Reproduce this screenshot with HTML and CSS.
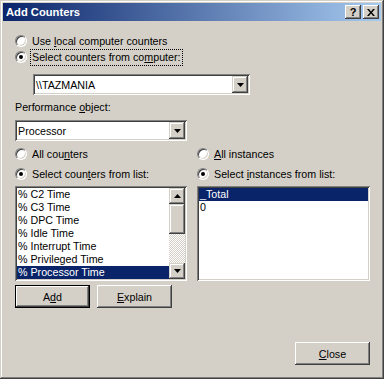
FILE: index.html
```html
<!DOCTYPE html>
<html lang="en">
<head>
  <meta charset="UTF-8" />
  <title>Add Counters</title>
  <link rel="stylesheet" href="styles.css">
</head>
<body>
  <div class="window">
    <div class="titlebar">
      <span class="title">Add Counters</span>
      <div class="caption-buttons">
        <span class="cap-btn">?</span>
        <span class="cap-btn close-x">
          <svg width="8" height="7" viewBox="0 0 8 7"><path d="M0 0h2l2 2.5L6 0h2L5 3.5 8 7H6L4 4.5 2 7H0l3-3.5z" fill="#000"/></svg>
        </span>
      </div>
    </div>

    <div class="content">
      <div class="radio-row">
        <span class="radio"></span>
        <span>Use <u>l</u>ocal computer counters</span>
      </div>
      <div class="radio-row">
        <span class="radio checked"></span>
        <span class="focus">Select counters from co<u>m</u>puter:</span>
      </div>

      <div class="combo computer">
        <span class="combo-text">\\TAZMANIA</span>
        <span class="drop-btn"><svg width="7" height="4" viewBox="0 0 7 4"><path d="M0 0h7L3.5 4z" fill="#000"/></svg></span>
      </div>

      <div class="label">Performance <u>o</u>bject:</div>
      <div class="combo object">
        <span class="combo-text">Processor</span>
        <span class="drop-btn"><svg width="7" height="4" viewBox="0 0 7 4"><path d="M0 0h7L3.5 4z" fill="#000"/></svg></span>
      </div>

      <div class="columns">
        <div class="column">
          <div class="radio-row">
            <span class="radio"></span>
            <span>All cou<u>n</u>ters</span>
          </div>
          <div class="radio-row">
            <span class="radio checked"></span>
            <span>Select coun<u>t</u>ers from list:</span>
          </div>
          <div class="listbox">
            <ul class="items">
              <li>% C2 Time</li>
              <li>% C3 Time</li>
              <li>% DPC Time</li>
              <li>% Idle Time</li>
              <li>% Interrupt Time</li>
              <li>% Privileged Time</li>
              <li class="selected">% Processor Time</li>
            </ul>
            <div class="scrollbar">
              <span class="sb-btn"><svg width="7" height="4" viewBox="0 0 7 4"><path d="M3.5 0L7 4H0z" fill="#000"/></svg></span>
              <span class="sb-thumb"></span>
              <span class="sb-track"></span>
              <span class="sb-btn"><svg width="7" height="4" viewBox="0 0 7 4"><path d="M0 0h7L3.5 4z" fill="#000"/></svg></span>
            </div>
          </div>
        </div>

        <div class="column">
          <div class="radio-row">
            <span class="radio"></span>
            <span><u>A</u>ll instances</span>
          </div>
          <div class="radio-row">
            <span class="radio checked"></span>
            <span>Select <u>i</u>nstances from list:</span>
          </div>
          <div class="listbox">
            <ul class="items">
              <li class="selected">_Total</li>
              <li>0</li>
            </ul>
          </div>
        </div>
      </div>

      <div class="button-row">
        <span class="button default">A<u>d</u>d</span>
        <span class="button"><u>E</u>xplain</span>
      </div>

      <div class="footer">
        <span class="button"><u>C</u>lose</span>
      </div>
    </div>
  </div>
</body>
</html>
```

FILE: styles.css
```css
body {
  margin: 0;
  background: #d4d0c8;
  font-family: 'Liberation Sans', Arial, sans-serif;
  font-size: 10.7px;
  color: #000;
}
u {
  text-underline-offset: 1px;
}
.window {
  width: 384px;
  height: 379px;
  box-sizing: border-box;
  padding: 3px;
  background: #d4d0c8;
  box-shadow: inset -1px -1px #404040, inset 1px 1px #d4d0c8,
              inset -2px -2px #808080, inset 2px 2px #fff;
}
.titlebar {
  height: 18px;
  display: flex;
  align-items: center;
  justify-content: space-between;
  padding: 0 2px 0 3px;
  background: linear-gradient(to right, #0a246a, #a6caf0);
}
.title {
  color: #fff;
  font-weight: bold;
  font-size: 11.2px;
}
.caption-buttons {
  display: flex;
  gap: 2px;
}
.cap-btn {
  width: 16px;
  height: 14px;
  box-sizing: border-box;
  display: flex;
  align-items: center;
  justify-content: center;
  background: #d4d0c8;
  font-weight: bold;
  font-size: 11px;
  box-shadow: inset -1px -1px #404040, inset 1px 1px #fff,
              inset -2px -2px #808080, inset 2px 2px #d4d0c8;
}
.content {
  padding: 12px 11px 0 12px;
}
.radio-row {
  height: 16px;
  display: flex;
  align-items: center;
  gap: 5px;
}
.radio {
  width: 12px;
  height: 12px;
  box-sizing: border-box;
  border-radius: 50%;
  background: #fff;
  border: 1px solid;
  border-color: #808080 #fff #fff #808080;
  box-shadow: inset 1px 1px #404040, inset -1px -1px #d4d0c8;
  display: flex;
  align-items: center;
  justify-content: center;
  flex: none;
}
.radio.checked::after {
  content: "";
  width: 4px;
  height: 4px;
  border-radius: 50%;
  background: #000;
}
.focus {
  outline: 1px dotted #000;
  outline-offset: 1px;
  line-height: 13px;
}
.combo {
  height: 21px;
  box-sizing: border-box;
  padding: 2px;
  display: flex;
  align-items: center;
  background: #fff;
  box-shadow: inset 1px 1px #808080, inset -1px -1px #fff,
              inset 2px 2px #404040, inset -2px -2px #d4d0c8;
}
.combo-text {
  flex: 1;
  padding-left: 1px;
}
.combo.computer {
  width: 217px;
  margin: 9px 0 0 18px;
}
.combo.object {
  width: 172px;
  margin-top: 6px;
}
.drop-btn {
  width: 16px;
  height: 17px;
  box-sizing: border-box;
  display: flex;
  align-items: center;
  justify-content: center;
  background: #d4d0c8;
  box-shadow: inset -1px -1px #404040, inset 1px 1px #d4d0c8,
              inset -2px -2px #808080, inset 2px 2px #fff;
}
.label {
  margin-top: 6px;
  line-height: 13px;
}
.columns {
  display: flex;
  gap: 10px;
  margin-top: 5px;
}
.column {
  width: 172px;
  display: flex;
  flex-direction: column;
  gap: 4px;
}
.column + .column {
  width: 173px;
}
.listbox {
  height: 95px;
  box-sizing: border-box;
  padding: 2px;
  display: flex;
  background: #fff;
  box-shadow: inset 1px 1px #808080, inset -1px -1px #fff,
              inset 2px 2px #404040, inset -2px -2px #d4d0c8;
}
.items {
  list-style: none;
  margin: 0;
  padding: 0;
  flex: 1;
  overflow: hidden;
}
.items li {
  height: 13px;
  line-height: 13px;
  padding-left: 1px;
  white-space: nowrap;
}
.items li.selected {
  background: #0a246a;
  color: #fff;
}
.scrollbar {
  width: 16px;
  display: flex;
  flex-direction: column;
}
.sb-btn, .sb-thumb {
  height: 16px;
  display: flex;
  align-items: center;
  justify-content: center;
  background: #d4d0c8;
  box-shadow: inset -1px -1px #404040, inset 1px 1px #d4d0c8,
              inset -2px -2px #808080, inset 2px 2px #fff;
}
.sb-thumb {
  height: 30px;
}
.sb-track {
  flex: 1;
  background: repeating-conic-gradient(#fff 0 25%, #d4d0c8 0 50%) 0 0 / 2px 2px;
}
.button-row {
  display: flex;
  gap: 7px;
  margin-top: 4px;
}
.button {
  width: 75px;
  height: 23px;
  box-sizing: border-box;
  display: flex;
  align-items: center;
  justify-content: center;
  background: #d4d0c8;
  box-shadow: inset -1px -1px #404040, inset 1px 1px #fff,
              inset -2px -2px #808080, inset 2px 2px #d4d0c8;
}
.button.default {
  border: 1px solid #000;
}
.footer {
  display: flex;
  justify-content: flex-end;
  margin-top: 34px;
}
```
